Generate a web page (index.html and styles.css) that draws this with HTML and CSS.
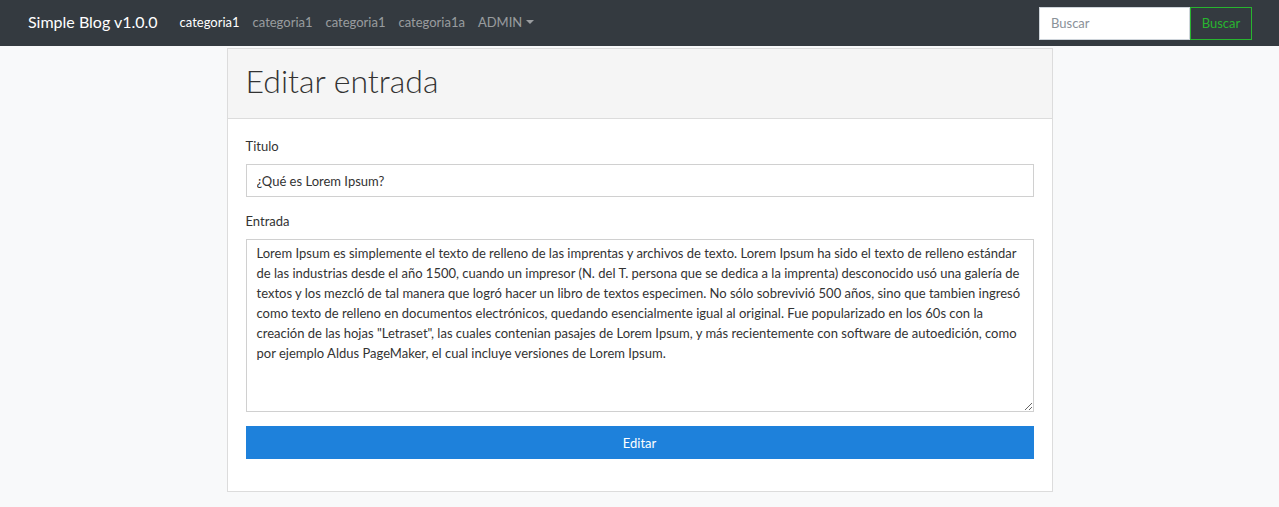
FILE: index.html
```html
<!DOCTYPE html>
<html lang="es">
<head>
<meta charset="utf-8">
<title>Simple Blog</title>
<link rel="stylesheet" href="styles.css">
</head>
<body>
<nav class="navbar">
  <a class="brand" href="#">Simple Blog v1.0.0</a>
  <ul class="nav">
    <li><a class="nav-link active" href="#">categoria1</a></li>
    <li><a class="nav-link" href="#">categoria1</a></li>
    <li><a class="nav-link" href="#">categoria1</a></li>
    <li><a class="nav-link" href="#">categoria1a</a></li>
    <li><a class="nav-link dropdown" href="#">ADMIN<span class="caret"></span></a></li>
  </ul>
  <form class="search">
    <input class="search-input" type="text" placeholder="Buscar">
    <button class="search-btn" type="button">Buscar</button>
  </form>
</nav>
<main class="main">
  <div class="card">
    <div class="card-header"><h1 class="title">Editar entrada</h1></div>
    <div class="card-body">
      <div class="group">
        <label class="label">Titulo</label>
        <input class="control" type="text" value="¿Qué es Lorem Ipsum?">
      </div>
      <div class="group">
        <label class="label">Entrada</label>
        <textarea class="control area">Lorem Ipsum es simplemente el texto de relleno de las imprentas y archivos de texto. Lorem Ipsum ha sido el texto de relleno estándar de las industrias desde el año 1500, cuando un impresor (N. del T. persona que se dedica a la imprenta) desconocido usó una galería de textos y los mezcló de tal manera que logró hacer un libro de textos especimen. No sólo sobrevivió 500 años, sino que tambien ingresó como texto de relleno en documentos electrónicos, quedando esencialmente igual al original. Fue popularizado en los 60s con la creación de las hojas "Letraset", las cuales contenian pasajes de Lorem Ipsum, y más recientemente con software de autoedición, como por ejemplo Aldus PageMaker, el cual incluye versiones de Lorem Ipsum.</textarea>
      </div>
      <button class="btn-primary" type="button">Editar</button>
    </div>
  </div>
</main>
</body>
</html>
```
FILE: styles.css
```css
* { box-sizing: border-box; }
html, body { margin: 0; padding: 0; }
body {
  background: #f8f9fa;
  font-family: Lato, "Liberation Sans", sans-serif;
  font-size: 14px;
  line-height: 20px;
  color: #333;
}
.navbar {
  height: 46px;
  background: #343a40;
  display: flex;
  align-items: center;
  padding: 0 27px 3px 28px;
}
.brand {
  color: #fff;
  text-decoration: none;
  font-size: 16px;
  font-weight: 400;
  margin-right: 22px;
}
.nav {
  list-style: none;
  margin: 0;
  padding: 0;
  display: flex;
  gap: 13px;
  flex: 1;
}
.nav-link {
  color: rgba(255,255,255,0.5);
  text-decoration: none;
  font-size: 13px;
  display: inline-flex;
  align-items: center;
}
.nav-link.active { color: #fff; }
.caret {
  display: inline-block;
  margin-left: 4px;
  border-top: 4px solid rgba(255,255,255,0.5);
  border-left: 4px solid transparent;
  border-right: 4px solid transparent;
}
.search { display: flex; margin-top: 3px; }
.search-input {
  width: 151px;
  height: 33px;
  border: 1px solid #ced4da;
  background: #fff;
  padding: 0 11px;
  font: inherit;
  font-size: 13px;
  outline: none;
}
.search-input::placeholder { color: #8a9199; }
.search-btn {
  width: 62px;
  height: 33px;
  border: 1px solid #28b52f;
  background: transparent;
  color: #28b52f;
  font: inherit;
  font-size: 13px;
  padding: 0;
}
.main {
  display: flex;
  justify-content: center;
  padding-top: 2px;
}
.card {
  width: 826px;
  background: #fff;
  border: 1px solid #dcdcdc;
}
.card-header {
  height: 70px;
  background: #f5f5f5;
  border-bottom: 1px solid #dcdcdc;
  padding: 0 18px 6px;
  display: flex;
  align-items: center;
}
.title {
  margin: 0;
  font-size: 32px;
  font-weight: 300;
  color: #333;
  line-height: 1;
}
.card-body {
  padding: 17px 18px 32px;
}
.group { margin-bottom: 14px; }
.label {
  display: block;
  font-size: 13px;
  margin-bottom: 8px;
}
.control {
  display: block;
  width: 100%;
  height: 33px;
  border: 1px solid #d0d0d0;
  padding: 0 10px;
  font: inherit;
  font-size: 13px;
  color: #333;
  background: #fff;
  outline: none;
}
.area {
  height: 173px;
  padding: 3px 10px;
  line-height: 20px;
  resize: vertical;
}
.btn-primary {
  display: block;
  width: 100%;
  height: 33px;
  border: none;
  background: #1e81db;
  color: #fff;
  font: inherit;
  font-size: 13px;
}
```
